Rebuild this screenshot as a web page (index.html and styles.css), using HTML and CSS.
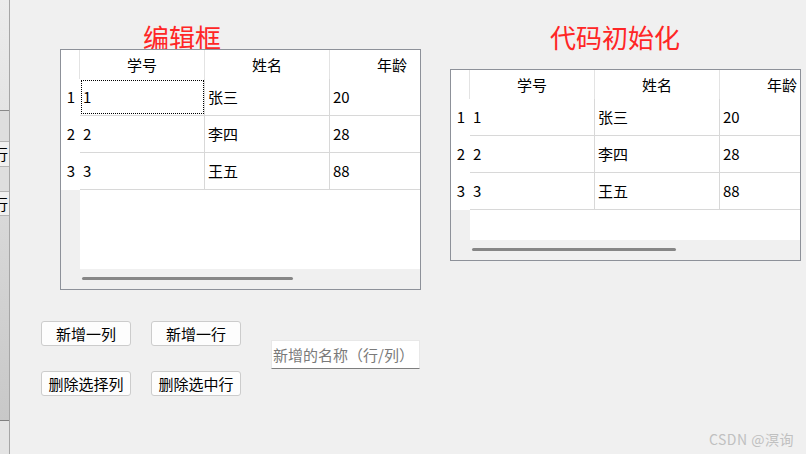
FILE: index.html
```html
<!DOCTYPE html>
<html lang="zh">
<head>
<meta charset="utf-8">
<title>QTableWidget</title>
<link rel="stylesheet" href="styles.css">
</head>
<body>
<div class="window">
  <div class="strip">
    <div class="seg seg0"></div>
    <div class="seg seg1"></div>
    <div class="seg seg2"><span class="cut">行</span></div>
    <div class="seg seg3"></div>
    <div class="seg seg4"><span class="cut">行</span></div>
    <div class="seg seg5"></div>
    <div class="seg seg6"></div>
  </div>
  <div class="main">
    <div class="pane pane-left">
      <div class="title title-left">编辑框</div>
      <div class="table table-left">
        <div class="table-body">
          <div class="vheader">
            <div class="corner"></div>
            <div class="vh-cell">1</div>
            <div class="vh-cell">2</div>
            <div class="vh-cell">3</div>
            <div class="vh-empty"></div>
          </div>
          <div class="grid">
            <div class="hrow">
              <div class="hcell">学号</div>
              <div class="hcell">姓名</div>
              <div class="hcell">年龄</div>
            </div>
            <div class="row"><div class="cell focus">1</div><div class="cell">张三</div><div class="cell">20</div></div>
            <div class="row"><div class="cell">2</div><div class="cell">李四</div><div class="cell">28</div></div>
            <div class="row"><div class="cell">3</div><div class="cell">王五</div><div class="cell">88</div></div>
          </div>
        </div>
        <div class="hscroll"><div class="handle handle-left"></div></div>
      </div>
      <div class="controls">
        <div class="buttons">
          <div class="btn">新增一列</div>
          <div class="btn">新增一行</div>
          <div class="btn">删除选择列</div>
          <div class="btn">删除选中行</div>
        </div>
        <div class="lineedit">新增的名称（行/列）</div>
      </div>
    </div>
    <div class="pane pane-right">
      <div class="title title-right">代码初始化</div>
      <div class="table table-right">
        <div class="table-body">
          <div class="vheader">
            <div class="corner"></div>
            <div class="vh-cell">1</div>
            <div class="vh-cell">2</div>
            <div class="vh-cell">3</div>
            <div class="vh-empty"></div>
          </div>
          <div class="grid">
            <div class="hrow">
              <div class="hcell">学号</div>
              <div class="hcell">姓名</div>
              <div class="hcell">年龄</div>
            </div>
            <div class="row"><div class="cell">1</div><div class="cell">张三</div><div class="cell">20</div></div>
            <div class="row"><div class="cell">2</div><div class="cell">李四</div><div class="cell">28</div></div>
            <div class="row"><div class="cell">3</div><div class="cell">王五</div><div class="cell">88</div></div>
          </div>
        </div>
        <div class="hscroll"><div class="handle handle-right"></div></div>
      </div>
    </div>
  </div>
  <div class="watermark">CSDN @溟询</div>
</div>
</body>
</html>
```

FILE: styles.css
```css
* { box-sizing: border-box; }
html, body { margin: 0; padding: 0; }
body {
  font-family: "Noto Sans CJK SC", "Noto Sans", sans-serif;
  font-size: 15px;
  color: #000;
  background: #f0f0f0;
}
.window {
  position: relative;
  width: 806px;
  height: 454px;
  overflow: hidden;
  display: flex;
  background: #f0f0f0;
}

/* left strip of the window behind */
.strip {
  width: 10px;
  flex: none;
  display: flex;
  flex-direction: column;
  border-right: 1px solid #a6a6a6;
  overflow: hidden;
}
.seg { flex: none; position: relative; overflow: hidden; }
.seg0 { height: 111px; background: linear-gradient(#ececec, #e4e4e4); border-bottom: 1px solid #8a8a8a; }
.seg1 { height: 31px; background: #dedede; border-bottom: 1px solid #b4b4b4; }
.seg2 { height: 25px; background: #f0f0f0; border-bottom: 1px solid #b4b4b4; }
.seg3 { height: 25px; background: #dedede; border-bottom: 1px solid #b4b4b4; }
.seg4 { height: 24px; background: #f0f0f0; border-bottom: 1px solid #b4b4b4; }
.seg5 { height: 205px; background: linear-gradient(#d8d8d8, #c8c8c8); border-bottom: 1px solid #808080; }
.seg6 { flex: 1; background: #e4e4e4; }
.cut {
  display: block;
  margin-left: -7px;
  font-size: 15px;
  line-height: 24px;
  color: #000;
}

.main { flex: 1; display: flex; }
.pane { display: flex; flex-direction: column; align-items: flex-start; }
.pane-left { width: 430px; }
.pane-right { flex: 1; }

.title {
  color: #ff2626;
  font-size: 26px;
  line-height: 29px;
  height: 26px;
  margin-top: 22px;
  white-space: nowrap;
}
.title-left { margin-left: 133px; }
.title-right { margin-left: 110px; }

/* table view */
.table {
  border: 1px solid #8d9199;
  background: #fff;
  display: flex;
  flex-direction: column;
  overflow: hidden;
}
.table-left { width: 361px; height: 241px; margin-left: 50px; margin-top: 1px; }
.table-right { width: 351px; height: 192px; margin-left: 10px; margin-top: 21px; }

.table-body { flex: 1; display: flex; min-height: 0; }
.vheader { width: 19px; flex: none; display: flex; flex-direction: column; }
.corner { height: 29px; background: #fff; border-right: 1px solid #e3e3e3; }
.vh-cell { height: 37px; background: #fff; text-align: center; line-height: 36px; padding-left: 1px; }
.vh-empty { flex: 1; background: #f0f0f0; }

.grid { flex: 1; overflow: hidden; background: #fff; }
.hrow { display: flex; height: 29px; width: 375px; }
.hcell {
  flex: none;
  width: 125px;
  height: 29px;
  line-height: 29px;
  text-align: center;
  border-right: 1px solid #e3e3e3;
  white-space: nowrap;
}
.row { display: flex; width: 375px; height: 37px; border-bottom: 1px solid #d8d8d8; }
.cell {
  flex: none;
  width: 125px;
  height: 36px;
  line-height: 36px;
  padding-left: 3px;
  border-right: 1px solid #d8d8d8;
  white-space: nowrap;
}
.cell.focus { outline: 1px dotted #000; outline-offset: -2px; }

.hscroll { height: 20px; flex: none; background: #f0f0f0; padding: 8px 0 0 21px; }
.handle { height: 3px; background: #868686; border-radius: 2px; }
.handle-left { width: 211px; }
.handle-right { width: 204px; }

/* controls */
.controls { display: flex; align-items: flex-start; margin-top: 31px; margin-left: 31px; }
.buttons {
  display: grid;
  grid-template-columns: 90px 90px;
  grid-auto-rows: 25px;
  column-gap: 20px;
  row-gap: 25px;
}
.btn {
  background: #fdfdfd;
  border: 1px solid #cccccc;
  border-radius: 3px;
  text-align: center;
  line-height: 23px;
  font-size: 15px;
  white-space: nowrap;
}
.lineedit {
  width: 149px;
  height: 29px;
  margin-left: 30px;
  margin-top: 19px;
  background: #fff;
  border: 1px solid #e8e8e8;
  border-bottom: 1px solid #7e7e7e;
  color: #7a7a7a;
  line-height: 27px;
  padding-left: 1px;
  white-space: nowrap;
  overflow: hidden;
}

.watermark {
  position: absolute;
  right: 12px;
  bottom: 5px;
  font-size: 14px;
  letter-spacing: 0.5px;
  color: #c0c0c0;
  white-space: nowrap;
}
```
